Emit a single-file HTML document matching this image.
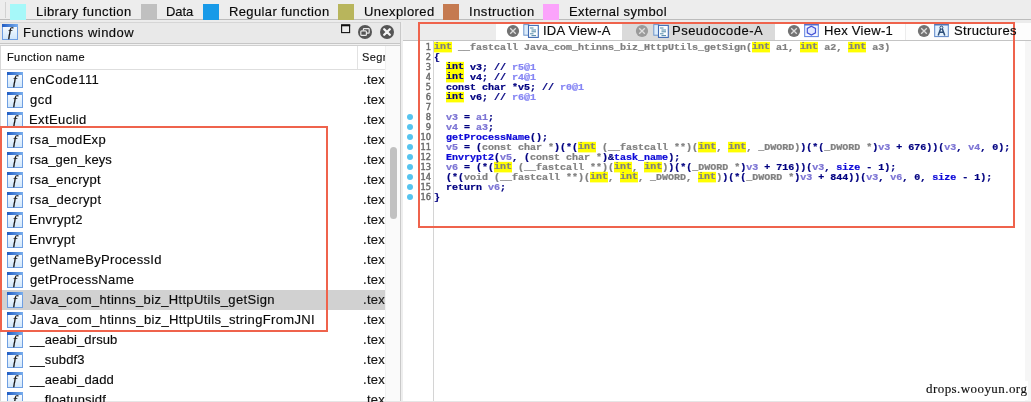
<!DOCTYPE html>
<html><head><meta charset="utf-8"><title>IDA</title>
<style>
html,body{margin:0;padding:0;}
body{width:1031px;height:402px;overflow:hidden;background:#fff;}
#root{position:relative;width:1031px;height:402px;overflow:hidden;background:#fff;will-change:transform;font-family:"Liberation Sans",sans-serif;color:#161616;}
.abs{position:absolute;}
.t{position:absolute;white-space:nowrap;font-size:13px;line-height:16px;-webkit-text-stroke:0.15px;transform:rotate(0.01deg);transform-origin:0 0;z-index:3;}
.sw{position:absolute;top:3.5px;width:16px;height:16px;}
.fi{position:absolute;width:16px;height:16px;}
.code{position:absolute;left:434px;white-space:pre;font-family:"Liberation Mono",monospace;font-weight:bold;font-size:10px;line-height:10px;height:10px;color:#000080;-webkit-text-stroke:0.25px;transform:scaleY(0.88);transform-origin:0 50%;}
.k{background:#ffff00;padding-top:0.7px;}
.g{color:#808080;}
.v{color:#7c74d4;}
.c{color:#8686f4;}
.f{color:#0c08d8;}
.ln{position:absolute;width:14px;left:416.8px;text-align:right;font-size:8.3px;line-height:10px;color:#6c6c6c;-webkit-text-stroke:0.45px;transform:rotate(0.01deg);font-family:"DejaVu Sans","Liberation Sans",sans-serif;}
.dot{position:absolute;left:407.3px;width:6px;height:6px;border-radius:50%;background:#55c4f0;}
</style></head><body><div id="root">
<svg width="0" height="0" style="position:absolute"><defs>
<linearGradient id="fg" x1="0" y1="0" x2="0" y2="1"><stop offset="0" stop-color="#fdfeff"/><stop offset="1" stop-color="#cfe6fb"/></linearGradient>
<linearGradient id="ft" x1="0" y1="0" x2="1" y2="0"><stop offset="0" stop-color="#1f5cc4"/><stop offset="1" stop-color="#79aeee"/></linearGradient>
<symbol id="fic" viewBox="0 0 16 16"><rect x="0.5" y="0.5" width="15" height="15" fill="url(#fg)" stroke="#6f9fe2"/><rect x="0" y="0" width="16" height="3" fill="url(#ft)"/>
<text x="8" y="12.2" text-anchor="middle" font-family="Liberation Serif, serif" font-style="italic" font-size="13.5" fill="#111" stroke="#111" stroke-width="0.25">f</text></symbol>
</defs></svg>

<div class="abs" style="left:0;top:0;width:1031px;height:19px;background:#ededed;border-bottom:1px solid #bcbcbc"></div>
<div class="abs" style="left:0;top:20px;width:1031px;height:2px;background:#ececec"></div>
<div class="abs" style="left:5px;top:2px;width:1px;height:16px;background:#d2d2d2"></div>
<div class="sw" style="left:10.0px;background:#a6f8f9"></div><div class="t" style="left:36.20px;top:3.70px;font-size:13px;letter-spacing:0.423px;font-family:'Liberation Sans', sans-serif;color:#0a0a0a;">Library function</div>
<div class="sw" style="left:140.5px;background:#c0c0c0"></div><div class="t" style="left:166.00px;top:3.70px;font-size:13px;letter-spacing:-0.110px;font-family:'Liberation Sans', sans-serif;color:#0a0a0a;">Data</div>
<div class="sw" style="left:203.0px;background:#189ae8"></div><div class="t" style="left:229.00px;top:3.70px;font-size:13px;letter-spacing:0.364px;font-family:'Liberation Sans', sans-serif;color:#0a0a0a;">Regular function</div>
<div class="sw" style="left:338.2px;background:#b8b55c"></div><div class="t" style="left:363.70px;top:3.70px;font-size:13px;letter-spacing:0.405px;font-family:'Liberation Sans', sans-serif;color:#0a0a0a;">Unexplored</div>
<div class="sw" style="left:443.0px;background:#c57a50"></div><div class="t" style="left:468.50px;top:3.70px;font-size:13px;letter-spacing:0.516px;font-family:'Liberation Sans', sans-serif;color:#0a0a0a;">Instruction</div>
<div class="sw" style="left:543.0px;background:#fba3fb"></div><div class="t" style="left:568.80px;top:3.70px;font-size:13px;letter-spacing:0.365px;font-family:'Liberation Sans', sans-serif;color:#0a0a0a;">External symbol</div>
<div class="abs" style="left:0;top:22px;width:400px;height:20px;background:#e9e9e9;border-top:1px solid #d6d6d6;border-bottom:1px solid #c6c6c6"></div>
<div class="abs" style="left:0;top:44px;width:400px;height:1px;background:#f1f1f1;border-bottom:1px solid #cfcfcf"></div>
<svg class="fi" style="left:2.4px;top:24px"><use href="#fic"/></svg>
<div class="t" style="left:22.60px;top:24.80px;font-size:13px;letter-spacing:0.491px;font-family:'Liberation Sans', sans-serif;color:#0a0a0a;">Functions window</div>
<svg class="abs" style="left:338px;top:22px" width="60" height="22" viewBox="0 0 60 22"><rect x="3.6" y="3.2" width="8" height="7.4" fill="#ececec" stroke="#111" stroke-width="1.1"/><rect x="3.05" y="2.3" width="9.1" height="2" fill="#111"/><circle cx="27" cy="10" r="7" fill="#555"/><rect x="22.8" y="8.8" width="5.6" height="4.6" rx="1" fill="none" stroke="#e8e8e8" stroke-width="1.2"/><path d="M25.4 8.6V7.2Q25.4 6.6 26 6.6H30.6Q31.2 6.6 31.2 7.2V10.6Q31.2 11.2 30.6 11.2H28.6" fill="none" stroke="#e8e8e8" stroke-width="1.2"/><circle cx="49" cy="10" r="7" fill="#555"/><path d="M46.2 7.2L51.8 12.8M51.8 7.2L46.2 12.8" stroke="#f6f6f6" stroke-width="2.3" stroke-linecap="round"/></svg>
<div class="abs" style="left:0;top:46px;width:385px;height:356px;overflow:hidden;background:#fff;">
<div class="abs" style="left:0;top:22.5px;width:385px;height:1px;background:#dedede"></div>
<div class="abs" style="left:357px;top:0;width:1px;height:23px;background:#e2e2e2"></div>
<div class="abs" style="left:0;top:-46px;width:385px;height:402px">
<div class="abs" style="left:0;top:290px;width:385px;height:20px;background:#d1d1d1"></div>
<div class="t" style="left:6.50px;top:49.49px;font-size:11px;letter-spacing:0.396px;font-family:'Liberation Sans', sans-serif;color:#0a0a0a;">Function name</div>
<div class="t" style="left:362px;top:49.3px;font-size:11px;letter-spacing:0.4px">Segment</div>
<svg class="fi" style="left:7px;top:72px"><use href="#fic"/></svg><div class="t" style="left:29.50px;top:71.70px;font-size:13px;letter-spacing:0.441px;font-family:'Liberation Sans', sans-serif;color:#0a0a0a;">enCode111</div><div class="t" style="left:363px;top:71.7px;letter-spacing:0.3px">.text</div>
<svg class="fi" style="left:7px;top:92px"><use href="#fic"/></svg><div class="t" style="left:29.50px;top:91.70px;font-size:13px;letter-spacing:0.535px;font-family:'Liberation Sans', sans-serif;color:#0a0a0a;">gcd</div><div class="t" style="left:363px;top:91.7px;letter-spacing:0.3px">.text</div>
<svg class="fi" style="left:7px;top:112px"><use href="#fic"/></svg><div class="t" style="left:28.90px;top:111.70px;font-size:13px;letter-spacing:0.393px;font-family:'Liberation Sans', sans-serif;color:#0a0a0a;">ExtEuclid</div><div class="t" style="left:363px;top:111.7px;letter-spacing:0.3px">.text</div>
<svg class="fi" style="left:7px;top:132px"><use href="#fic"/></svg><div class="t" style="left:29.50px;top:131.70px;font-size:13px;letter-spacing:0.295px;font-family:'Liberation Sans', sans-serif;color:#0a0a0a;">rsa_modExp</div><div class="t" style="left:363px;top:131.7px;letter-spacing:0.3px">.text</div>
<svg class="fi" style="left:7px;top:152px"><use href="#fic"/></svg><div class="t" style="left:29.50px;top:151.70px;font-size:13px;letter-spacing:0.078px;font-family:'Liberation Sans', sans-serif;color:#0a0a0a;">rsa_gen_keys</div><div class="t" style="left:363px;top:151.7px;letter-spacing:0.3px">.text</div>
<svg class="fi" style="left:7px;top:172px"><use href="#fic"/></svg><div class="t" style="left:29.50px;top:171.70px;font-size:13px;letter-spacing:0.269px;font-family:'Liberation Sans', sans-serif;color:#0a0a0a;">rsa_encrypt</div><div class="t" style="left:363px;top:171.7px;letter-spacing:0.3px">.text</div>
<svg class="fi" style="left:7px;top:192px"><use href="#fic"/></svg><div class="t" style="left:29.50px;top:191.70px;font-size:13px;letter-spacing:0.309px;font-family:'Liberation Sans', sans-serif;color:#0a0a0a;">rsa_decrypt</div><div class="t" style="left:363px;top:191.7px;letter-spacing:0.3px">.text</div>
<svg class="fi" style="left:7px;top:212px"><use href="#fic"/></svg><div class="t" style="left:28.90px;top:211.70px;font-size:13px;letter-spacing:0.318px;font-family:'Liberation Sans', sans-serif;color:#0a0a0a;">Envrypt2</div><div class="t" style="left:363px;top:211.7px;letter-spacing:0.3px">.text</div>
<svg class="fi" style="left:7px;top:232px"><use href="#fic"/></svg><div class="t" style="left:28.90px;top:231.70px;font-size:13px;letter-spacing:0.307px;font-family:'Liberation Sans', sans-serif;color:#0a0a0a;">Envrypt</div><div class="t" style="left:363px;top:231.7px;letter-spacing:0.3px">.text</div>
<svg class="fi" style="left:7px;top:252px"><use href="#fic"/></svg><div class="t" style="left:29.50px;top:251.70px;font-size:13px;letter-spacing:0.342px;font-family:'Liberation Sans', sans-serif;color:#0a0a0a;">getNameByProcessId</div><div class="t" style="left:363px;top:251.7px;letter-spacing:0.3px">.text</div>
<svg class="fi" style="left:7px;top:272px"><use href="#fic"/></svg><div class="t" style="left:29.50px;top:271.70px;font-size:13px;letter-spacing:0.332px;font-family:'Liberation Sans', sans-serif;color:#0a0a0a;">getProcessName</div><div class="t" style="left:363px;top:271.7px;letter-spacing:0.3px">.text</div>
<svg class="fi" style="left:7px;top:292px"><use href="#fic"/></svg><div class="t" style="left:29.50px;top:291.70px;font-size:13px;letter-spacing:0.326px;font-family:'Liberation Sans', sans-serif;color:#0a0a0a;">Java_com_htinns_biz_HttpUtils_getSign</div><div class="t" style="left:363px;top:291.7px;letter-spacing:0.3px">.text</div>
<svg class="fi" style="left:7px;top:312px"><use href="#fic"/></svg><div class="t" style="left:29.50px;top:311.70px;font-size:13px;letter-spacing:0.343px;font-family:'Liberation Sans', sans-serif;color:#0a0a0a;">Java_com_htinns_biz_HttpUtils_stringFromJNI</div><div class="t" style="left:363px;top:311.7px;letter-spacing:0.3px">.text</div>
<svg class="fi" style="left:7px;top:332px"><use href="#fic"/></svg><div class="t" style="left:30.30px;top:331.70px;font-size:13px;letter-spacing:0.109px;font-family:'Liberation Sans', sans-serif;color:#0a0a0a;">__aeabi_drsub</div><div class="t" style="left:363px;top:331.7px;letter-spacing:0.3px">.text</div>
<svg class="fi" style="left:7px;top:352px"><use href="#fic"/></svg><div class="t" style="left:30.30px;top:351.70px;font-size:13px;letter-spacing:0.148px;font-family:'Liberation Sans', sans-serif;color:#0a0a0a;">__subdf3</div><div class="t" style="left:363px;top:351.7px;letter-spacing:0.3px">.text</div>
<svg class="fi" style="left:7px;top:372px"><use href="#fic"/></svg><div class="t" style="left:30.30px;top:371.70px;font-size:13px;letter-spacing:0.119px;font-family:'Liberation Sans', sans-serif;color:#0a0a0a;">__aeabi_dadd</div><div class="t" style="left:363px;top:371.7px;letter-spacing:0.3px">.text</div>
<svg class="fi" style="left:7px;top:392px"><use href="#fic"/></svg><div class="t" style="left:30.30px;top:391.70px;font-size:13px;letter-spacing:0.174px;font-family:'Liberation Sans', sans-serif;color:#0a0a0a;">__floatunsidf</div><div class="t" style="left:363px;top:391.7px;letter-spacing:0.3px">.text</div>
</div></div>
<div class="abs" style="left:0;top:46px;width:1px;height:356px;background:#d8d8d8"></div>
<div class="abs" style="left:385px;top:46px;width:15px;height:356px;background:#fafafa;border-left:1px solid #f0f0f0;box-sizing:border-box"></div>
<div class="abs" style="left:389.5px;top:147px;width:7px;height:72px;border-radius:3.5px;background:#c1c1c1"></div>
<div class="abs" style="left:400px;top:22px;width:1px;height:380px;background:#c9c9c9"></div>
<div class="abs" style="left:401px;top:22px;width:2px;height:380px;background:#eeeeee"></div>
<div class="abs" style="left:0.4px;top:126.4px;width:328px;height:206px;border:2px solid #ef634c;box-sizing:border-box"></div>
<div class="abs" style="left:403px;top:22px;width:628px;height:18px;background:#ececec;border-bottom:1px solid #c4c4c4"></div>
<div class="abs" style="left:496px;top:23px;width:126px;height:17px;background:#fff"></div>
<div class="abs" style="left:622px;top:23px;width:153px;height:17px;background:#dadada"></div>
<div class="abs" style="left:775px;top:23px;width:130px;height:17px;background:#fff"></div>
<div class="abs" style="left:906px;top:23px;width:125px;height:17px;background:#fdfdfd"></div>
<svg class="abs" style="left:506.0px;top:23.9px" width="14" height="14" viewBox="0 0 14 14"><circle cx="7" cy="7" r="6.1" fill="#727272"/><path d="M4.2 4.2L9.8 9.8M9.8 4.2L4.2 9.8" stroke="#dedede" stroke-width="1.3"/></svg>
<svg class="abs" style="left:523.4px;top:23px" width="17" height="16" viewBox="0 0 17 16"><rect x="0.8" y="1.6" width="5" height="10.6" fill="#dcecfb" stroke="#6f97cc" stroke-width="1"/><rect x="5.5" y="2.4" width="9.8" height="12" fill="#fbfdff" stroke="#3f6ab2" stroke-width="1.1"/><path d="M7 5H10.5M8.5 7H13M8.5 8.8H13M7 10.8H10.5M8.5 12.6H13" stroke="#3d7a9c" stroke-width="0.9"/></svg>
<div class="t" style="left:542.60px;top:23.10px;font-size:13px;letter-spacing:0.205px;font-family:'Liberation Sans', sans-serif;color:#0a0a0a;">IDA View-A</div>
<svg class="abs" style="left:635.0px;top:23.9px" width="14" height="14" viewBox="0 0 14 14"><circle cx="7" cy="7" r="6.1" fill="#9a9a9a"/><path d="M4.2 4.2L9.8 9.8M9.8 4.2L4.2 9.8" stroke="#dedede" stroke-width="1.3"/></svg>
<svg class="abs" style="left:652.7px;top:23px" width="17" height="16" viewBox="0 0 17 16"><rect x="0.8" y="1.6" width="5" height="10.6" fill="#dcecfb" stroke="#6f97cc" stroke-width="1"/><rect x="5.5" y="2.4" width="9.8" height="12" fill="#fbfdff" stroke="#3f6ab2" stroke-width="1.1"/><path d="M7 5H10.5M8.5 7H13M8.5 8.8H13M7 10.8H10.5M8.5 12.6H13" stroke="#3d7a9c" stroke-width="0.9"/></svg>
<div class="t" style="left:672.00px;top:23.10px;font-size:13px;letter-spacing:0.490px;font-family:'Liberation Sans', sans-serif;color:#0a0a0a;">Pseudocode-A</div>
<svg class="abs" style="left:787.0px;top:23.9px" width="14" height="14" viewBox="0 0 14 14"><circle cx="7" cy="7" r="6.1" fill="#727272"/><path d="M4.2 4.2L9.8 9.8M9.8 4.2L4.2 9.8" stroke="#dedede" stroke-width="1.3"/></svg>
<svg class="abs" style="left:804px;top:23px" width="16" height="16" viewBox="0 0 16 16"><rect x="0.7" y="1.8" width="13.6" height="11.8" fill="#f4f8ff" stroke="#5b7fe0" stroke-width="1"/><rect x="0.2" y="1.1" width="14.6" height="1.2" fill="#4a68c8"/><path d="M7.4 3.2L11.5 5.4V9.9L7.4 12.1L3.3 9.9V5.4Z" fill="#e2e9ff" stroke="#4452d6" stroke-width="1.2"/></svg>
<div class="t" style="left:823.50px;top:23.10px;font-size:13px;letter-spacing:0.278px;font-family:'Liberation Sans', sans-serif;color:#0a0a0a;">Hex View-1</div>
<svg class="abs" style="left:916.5px;top:23.9px" width="14" height="14" viewBox="0 0 14 14"><circle cx="7" cy="7" r="6.1" fill="#727272"/><path d="M4.2 4.2L9.8 9.8M9.8 4.2L4.2 9.8" stroke="#dedede" stroke-width="1.3"/></svg>
<svg class="abs" style="left:934px;top:23px" width="16" height="16" viewBox="0 0 16 16"><rect x="0.7" y="1.8" width="13.6" height="11.8" fill="#e4f2ff" stroke="#5b86c8" stroke-width="1"/><rect x="0.2" y="1.1" width="14.6" height="1.2" fill="#4a6fb0"/><path d="M7.4 3.6L4.2 12.4M7.4 3.6L10.8 12.4M5.4 9.2H9.6" fill="none" stroke="#2b4d78" stroke-width="1.5"/><circle cx="7.4" cy="4.6" r="1.5" fill="#e4f2ff" stroke="#2b4d78" stroke-width="1"/></svg>
<div class="t" style="left:954.00px;top:23.10px;font-size:13px;letter-spacing:0.362px;font-family:'Liberation Sans', sans-serif;color:#0a0a0a;">Structures</div>
<div class="abs" style="left:1025px;top:41px;width:6px;height:361px;background:#f6f6f6"></div>
<div class="ln" style="top:42.3px">1</div><div class="code" style="top:43px"><span class="g"><span class="k">int</span> __fastcall Java_com_htinns_biz_HttpUtils_getSign(<span class="k">int</span> a1, <span class="k">int</span> a2, <span class="k">int</span> a3)</span></div>
<div class="ln" style="top:52.3px">2</div><div class="code" style="top:53px">{</div>
<div class="ln" style="top:62.3px">3</div><div class="code" style="top:63px">  <span class="k">int</span> v3; // <span class="c">r5@1</span></div>
<div class="ln" style="top:72.3px">4</div><div class="code" style="top:73px">  <span class="k">int</span> v4; // <span class="c">r4@1</span></div>
<div class="ln" style="top:82.3px">5</div><div class="code" style="top:83px">  const char *v5; // <span class="c">r0@1</span></div>
<div class="ln" style="top:92.3px">6</div><div class="code" style="top:93px">  <span class="k">int</span> v6; // <span class="c">r6@1</span></div>
<div class="ln" style="top:102.3px">7</div><div class="code" style="top:103px"></div>
<div class="ln" style="top:112.3px">8</div><div class="code" style="top:113px">  <span class="v">v3</span> = <span class="v">a1</span>;</div>
<div class="ln" style="top:122.3px">9</div><div class="code" style="top:123px">  <span class="v">v4</span> = <span class="v">a3</span>;</div>
<div class="ln" style="top:132.3px">10</div><div class="code" style="top:133px">  <span class="f">getProcessName</span>();</div>
<div class="ln" style="top:142.3px">11</div><div class="code" style="top:143px">  <span class="v">v5</span> = (<span class="g">const char *</span>)(*(<span class="g"><span class="k">int</span> (__fastcall **)(<span class="k">int</span>, <span class="k">int</span>, _DWORD)</span>)(*(<span class="g">_DWORD *</span>)<span class="v">v3</span> + 676))(<span class="v">v3</span>, <span class="v">v4</span>, 0);</div>
<div class="ln" style="top:152.3px">12</div><div class="code" style="top:153px">  <span class="f">Envrypt2</span>(<span class="v">v5</span>, (<span class="g">const char *</span>)&amp;<span class="f">task_name</span>);</div>
<div class="ln" style="top:162.3px">13</div><div class="code" style="top:163px">  <span class="v">v6</span> = (*(<span class="g"><span class="k">int</span> (__fastcall **)(<span class="k">int</span>, <span class="k">int</span>)</span>)(*(<span class="g">_DWORD *</span>)<span class="v">v3</span> + 716))(<span class="v">v3</span>, <span class="f">size</span> - 1);</div>
<div class="ln" style="top:172.3px">14</div><div class="code" style="top:173px">  (*(<span class="g">void (__fastcall **)(<span class="k">int</span>, <span class="k">int</span>, _DWORD, <span class="k">int</span>)</span>)(*(<span class="g">_DWORD *</span>)<span class="v">v3</span> + 844))(<span class="v">v3</span>, <span class="v">v6</span>, 0, <span class="f">size</span> - 1);</div>
<div class="ln" style="top:182.3px">15</div><div class="code" style="top:183px">  return <span class="v">v6</span>;</div>
<div class="ln" style="top:192.3px">16</div><div class="code" style="top:193px">}</div>
<div class="dot" style="top:113.8px"></div>
<div class="dot" style="top:123.8px"></div>
<div class="dot" style="top:133.8px"></div>
<div class="dot" style="top:143.8px"></div>
<div class="dot" style="top:153.8px"></div>
<div class="dot" style="top:163.8px"></div>
<div class="dot" style="top:173.8px"></div>
<div class="dot" style="top:183.8px"></div>
<div class="dot" style="top:193.8px"></div>
<div class="abs" style="left:433px;top:41px;width:1px;height:361px;background:#d4d4d4"></div>
<div class="abs" style="left:418px;top:21.6px;width:597px;height:206.3px;border:2px solid #ef634c;box-sizing:border-box"></div>
<div class="abs" style="left:0;top:401px;width:1031px;height:1px;background:#e6e6e6"></div>
<div class="abs" style="left:919px;top:381px;width:109px;height:19px;background:#fff"></div>
<div class="t" style="left:925.60px;top:381.21px;font-size:13px;letter-spacing:0.435px;font-family:'Liberation Serif', serif;color:#111;">drops.wooyun.org</div>
</div></body></html>
